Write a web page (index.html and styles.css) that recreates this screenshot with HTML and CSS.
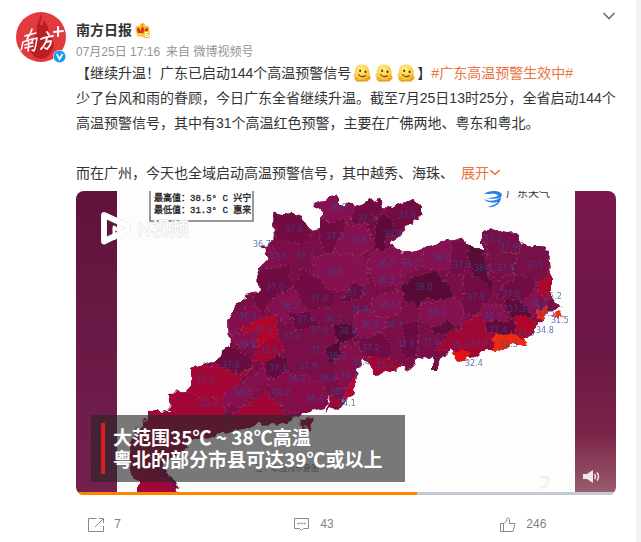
FILE: index.html
```html
<!DOCTYPE html>
<html lang="zh-CN">
<head>
<meta charset="utf-8">
<meta name="viewport" content="width=device-width, initial-scale=1">
<title>南方日报</title>
<link rel="stylesheet" href="styles.css">
</head>
<body>
<svg class="defs" aria-hidden="true">
  <defs>
    <radialGradient id="face" cx=".4" cy=".3" r=".75"><stop offset="0" stop-color="#fff09a"/><stop offset=".6" stop-color="#fdcf3c"/><stop offset="1" stop-color="#efa11f"/></radialGradient>
    <symbol id="melt" viewBox="0 0 18 18">
      <path d="M2 10C1 4 4 .5 9 .5s8 4 7.500 9c-.2 2 .8 3 1 4 .3 2-1.500 2-2 3-1 1.500-4 1-6.500 1s-5 .6-6-.8c-1.500-.4-2-1.700-1.200-2.700C2.500 13 2.200 12 2 10z" fill="url(#face)"/>
      <path d="M1.500 9.500c-1.300 2 .5 5.500 3.500 5M13 14.500c1.500.3 3-.3 3.500-1M4 16.500c3 .7 7 .4 9.500-.3" fill="none" stroke="#df9520" stroke-width=".8"/>
      <ellipse cx="7.200" cy="6.800" rx="1" ry="1.400" fill="#5b3215"/><ellipse cx="12.500" cy="7.800" rx="1" ry="1.400" fill="#5b3215"/>
      <path d="M5.500 10.500c1.500 2 4.500 2.500 7 1.200" fill="none" stroke="#70400f" stroke-width="1.100" stroke-linecap="round"/>
    </symbol>
  </defs>
</svg>
<article class="card">
  <header class="head">
    <a class="avatar" href="#" aria-label="南方日报">
      <svg viewBox="0 0 50 50">
        <circle cx="25" cy="25" r="25" fill="#e13a3f"/>
        <path d="M25 1c3 6-3 9 0 13 2-2 3-4 2-6 8 7 4 12 7 15 5 7 5 14-1 20-4 5-12 5-16 0-5-6-4-12 1-18 4-5 2-9 4-14 1-4 3-6 3-10z" fill="#b91e25"/>
        <g fill="none" stroke="#fff" stroke-linecap="round" stroke-linejoin="round">
          <path d="M9 24c4-1 7-2 11-3M16 17c-1 4-3 7-5 10M7 30c-1 4-1 6-2 8M7 30c5-2 9-3 14-4-1 5-1 9-3 13l-2-1M12 29l1 2M17 28l-2 3M9 33c3-1 6-2 8-2M9 36c3-1 5-1 8-2M13 31c0 3-1 5-1 8" stroke-width="1.500"/>
          <path d="M31 20l2 3M25 27c4-2 7-2 12-3M31 26c-1 5-3 8-6 11M30 30l5-1c0 4-2 6-4 8l-2-1" stroke-width="1.800"/>
          <path d="M42 15v9M38 20l9-1" stroke-width="2"/>
        </g>
      </svg>
      <svg class="verified" viewBox="0 0 13 13"><circle cx="6.500" cy="6.500" r="6.500" fill="#fff"/><circle cx="6.500" cy="6.500" r="6" fill="#129cf3"/><path d="M3.700 4l2.800 5.200L9.500 4" fill="none" stroke="#fff" stroke-width="1.700"/></svg>
    </a>
    <div class="who">
      <div class="name-row">
        <a class="name" href="#">南方日报</a>
        <svg class="crown" viewBox="0 0 15 15"><path d="M2.500 13.500L.5 6c0-2.500 2-4 4.300-3C5 1 6 0 7.500 0s2.500 1 2.700 3c2.300-1 4.300.5 4.300 3l-2 7.500z" fill="#fbb92b"/><path d="M2 6c.5-2 3.500-1.500 4 4H3.200zM13 6c-.5-2-3.500-1.500-4 4h3z" fill="#cf2a1a"/><path d="M7.500 3.500L9 5.500v5H6v-5z" fill="#d93a1e"/><path d="M3 10.500h9v2H3z" fill="#f9dc4d"/><path d="M6.500 2h2" stroke="#e98a15"/><rect x="8.500" y="8" width="6" height="7" rx="1" fill="#f6b428"/><path d="M13.200 9.500h-3v4h3v-2h-3" fill="none" stroke="#fff"/></svg>
      </div>
      <div class="meta"><a href="#">07月25日 17:16</a><span>来自 <a href="#">微博视频号</a></span></div>
    </div>
    <button class="more" aria-label="更多"><svg viewBox="0 0 14 8"><path d="M1.500 1l5.500 5.500L12.500 1" fill="none" stroke="#69727f" stroke-width="1.600"/></svg></button>
  </header>

  <div class="body">
    <div class="text">
      <p>【继续升温！广东已启动144个高温预警信号<svg class="emoji"><use href="#melt"/></svg><svg class="emoji"><use href="#melt"/></svg><svg class="emoji"><use href="#melt"/></svg>】<a href="#">#广东高温预警生效中#</a><br>少了台风和雨的眷顾，今日广东全省继续升温。截至7月25日13时25分，全省启动144个高温预警信号，其中有31个高温红色预警，主要在广佛两地、粤东和粤北。</p>
      <p class="last">而在广州，今天也全域启动高温预警信号，其中越秀、海珠、<a class="expand" href="#">展开<svg viewBox="0 0 10 6"><path d="M1 1l4 3.500L9 1" fill="none" stroke="#eb7340" stroke-width="1.400"/></svg></a></p>
    </div>

    <section class="video" aria-label="视频">
      <svg class="frame" viewBox="76 191 540 304" preserveAspectRatio="xMidYMid slice">
        <defs>
          <linearGradient id="left" x1="0" y1="0" x2="0" y2="1"><stop offset="0" stop-color="#60133c"/><stop offset="1" stop-color="#74204f"/></linearGradient>
          <linearGradient id="right" x1="0" y1="0" x2="0" y2="1"><stop offset="0" stop-color="#79184c"/><stop offset=".5" stop-color="#6b1644"/><stop offset=".8" stop-color="#7c2349"/><stop offset="1" stop-color="#9a5f70"/></linearGradient>
          <clipPath id="land"><path d="M138 495L138 482 131 470 130 453 135 427 144 425 146 412 171 410 169 393 186 392 191 387 191 370 211 362 229 347 228 323 234 307 244 302 245 295 260 290 257 270 267 260 262 247 275 235 272 225 275 213 300 216 310 230 322 228 322 212 314 205 324 201 337 194 343 204 353 207 380 197 382 207 393 208 407 202 413 199 422 205 422 215 403 228 399 238 390 243 403 253 423 248 443 243 463 237 468 247 482 249 482 230 490 229 506 234 518 233 523 245 542 245 548 255 550 263 552 277 552 297 557 305 563 307 556 311 548 313 542 321 537 323 534 333 527 337 527 345 514 345 500 350 491 350 480 353 470 358 460 354 450 350 442 360 439 369 432 369 432 359 425 356 413 359 416 364 408 372 407 368 392 370 375 375 368 363 362 358 358 375 352 395 345 400 337 410 330 408 325 414 330 395 324 407 316 410 303 413 287 423 257 425 240 431 219 433 204 440 191 440 183 453 163 463 163 470 174 479 179 495Z"/></clipPath>
          <filter id="rough" x="-5%" y="-5%" width="110%" height="110%" color-interpolation-filters="sRGB"><feTurbulence type="fractalNoise" baseFrequency=".11" numOctaves="2" seed="4"/><feDisplacementMap in="SourceGraphic" scale="10" xChannelSelector="R" yChannelSelector="G"/></filter>
        </defs>
        <rect x="76" y="191" width="540" height="304" fill="#fdfdfd"/>
        <g filter="url(#rough)">
          <g clip-path="url(#land)">
            <rect x="117" y="191" width="458" height="304" fill="#7a0f47"/>
            <g stroke="#a8688a" stroke-width=".5" stroke-dasharray="2 3">
              <path d="M270 210H310V240L298 244 280 240Z" fill="#730b43"/>
              <path d="M310 195L352 195 355 216 345 222 322 219Z" fill="#861151"/>
              <path d="M355 205L382 195 382 213 372 232 352 222Z" fill="#730b43"/>
              <path d="M376 217L391 216 395 232 385 240 382 252 374 248Z" fill="#600a38"/>
              <path d="M383 205L424 195 422 218 395 234 390 216Z" fill="#730b43"/>
              <path d="M322 222L345 218 347 231 335 243 332 253 320 247Z" fill="#730b43"/>
              <path d="M347 223L368 225 375 245 360 256 332 253 338 241Z" fill="#861151"/>
              <path d="M312 258L330 252 361 256 370 270 367 285 341 292 319 285Z" fill="#861151"/>
              <path d="M262 245L275 247 280 265 267 273 256 267Z" fill="#82104c"/>
              <path d="M260 270L288 267 293 285 270 300 263 315 254 300Z" fill="#6f0b40"/>
              <path d="M368 254L390 246 406 250 403 285 376 286 369 270Z" fill="#861151"/>
              <path d="M403 250L422 247 422 268 401 277Z" fill="#861151"/>
              <path d="M421 247L450 242 452 265 438 272 423 264Z" fill="#861151"/>
              <path d="M402 285L420 276 436 270 457 298 440 302 427 297 416 309 403 297Z" fill="#570b34"/>
              <path d="M450 241L468 239 471 260 463 276 445 276 452 259Z" fill="#720d46"/>
              <path d="M468 245L482 248 488 270 495 290 491 293 471 273Z" fill="#580c36"/>
              <path d="M483 228L522 234 519 251 489 254Z" fill="#771047"/>
              <path d="M486 254L519 252 513 274 496 281Z" fill="#771047"/>
              <path d="M520 247L546 243 553 275 536 283 514 272Z" fill="#771047"/>
              <path d="M463 278L477 276 496 294 486 302 476 319 462 311Z" fill="#720d43"/>
              <path d="M500 288L521 272 536 284 527 296 508 301 497 298Z" fill="#720d43"/>
              <path d="M540 280L553 269 555 295 546 301 537 290Z" fill="#ab062d"/>
              <path d="M522 303L537 284 540 310 529 321 518 314Z" fill="#861151"/>
              <path d="M420 304L458 298 465 313 459 331 438 329 420 319Z" fill="#861151"/>
              <path d="M482 304L500 304 507 319 492 328 477 319Z" fill="#861151"/>
              <path d="M505 301L521 298 531 315 520 323 509 316Z" fill="#5f0b39"/>
              <path d="M487 322L512 319 515 329 505 335 485 333Z" fill="#650a3b"/>
              <path d="M466 322L481 316 485 332 504 336 497 355 459 358 434 348Z" fill="#a10735"/>
              <path d="M515 316L525 314 539 325 530 342 514 335Z" fill="#b00429"/>
              <path d="M537 308L550 306 547 318 537 319Z" fill="#ee2714"/>
              <path d="M494 336L510 333 528 339 528 350 494 350Z" fill="#ec2c0e"/>
              <path d="M430 328L449 322 459 326 445 336 430 334Z" fill="#610b39"/>
              <path d="M403 323L419 321 418 355 403 358Z" fill="#6c0b42"/>
              <path d="M300 271L310 271 337 300 323 310 300 306 292 295Z" fill="#700b43"/>
              <path d="M344 297L353 282 365 287 358 298 344 304Z" fill="#6a0b40"/>
              <path d="M265 309L292 287 306 307 285 323 275 314Z" fill="#861151"/>
              <path d="M242 324L276 315 278 343 270 351 260 344 242 341Z" fill="#b1052b"/>
              <path d="M230 315L256 304 264 315 243 328 229 330Z" fill="#850d4b"/>
              <path d="M333 326L352 320 356 340 337 347Z" fill="#570a35"/>
              <path d="M354 315L365 309 386 319 383 333 357 335Z" fill="#861151"/>
              <path d="M372 299L401 288 401 313 386 319 371 310Z" fill="#861151"/>
              <path d="M290 313L307 312 320 325 296 332Z" fill="#690b40"/>
              <path d="M229 334L257 331 258 345 239 348Z" fill="#861151"/>
              <path d="M211 360L230 346 255 361 247 371 230 373Z" fill="#6b0c41"/>
              <path d="M258 344L275 337 284 349 270 367 253 361Z" fill="#a20533"/>
              <path d="M265 361L282 355 289 369 276 379 265 373Z" fill="#650a3c"/>
              <path d="M326 347L337 343 343 356 335 362 328 359Z" fill="#570a35"/>
              <path d="M355 342L382 333 392 345 389 361 373 363Z" fill="#700b43"/>
              <path d="M359 355L394 359 408 369 377 378Z" fill="#a10632"/>
              <path d="M339 347L361 344 359 382 342 390 335 369Z" fill="#850e4c"/>
              <path d="M185 390L190 368 217 365 238 374 252 369 235 386 223 408 196 403Z" fill="#a40736"/>
              <path d="M244 382L267 366 267 380 243 407 222 408 227 391Z" fill="#87104f"/>
              <path d="M267 380L294 372 322 382 332 409 302 417 283 410 272 389Z" fill="#850e4a"/>
              <path d="M253 401L264 392 280 406 288 424 230 435 233 413Z" fill="#a00635"/>
              <path d="M168 389L224 401 229 438 182 452 152 463 184 500 132 500 127 425 145 409Z" fill="#a00737"/>
              <path d="M347 383L357 373 356 400 344 405Z" fill="#b40632"/>
            </g>
          </g>
          <path d="M552 316L561 313 564 317 557 319Z" fill="#ee3319"/>
          <path d="M451 353L461 349 470 355 465 361 456 358Z" fill="#e01313"/>
          <path d="M330 396L342 399 339 407 330 407ZM301 420L315 415 310 428 300 429Z" fill="#9a0a34"/>
        </g>
        <g class="temps">
          <text x="329" y="210">36.9</text><text x="358" y="221">37.1</text><text x="398" y="218">37.0</text><text x="285" y="232">37.9</text><text x="326" y="239">37.9</text><text x="349" y="243">36.8</text><text x="384" y="237">38.3</text><text x="253" y="247">36.7</text><text x="269" y="259">37.3</text><text x="296" y="259">37.7</text><text x="325" y="275">36.5</text><text x="377" y="266">36.5</text><text x="402" y="266">36.5</text><text x="433" y="261">36.0</text><text x="453" y="268">37.0</text><text x="474" y="271">38.9</text><text x="484" y="242">37.2</text><text x="500" y="250">37.9</text><text x="497" y="271">37.5</text><text x="526" y="268">37.1</text>
          <text x="266" y="290">37.0</text><text x="377" y="283">36.3</text><text x="415" y="290">38.0</text><text x="310" y="301">37.4</text><text x="347" y="296">37.1</text><text x="467" y="300">37.9</text><text x="502" y="297">37.8</text><text x="544" y="299">35.2</text><text x="281" y="309">36.7</text><text x="351" y="312">36.8</text><text x="378" y="308">36.6</text><text x="428" y="315">36.1</text><text x="239" y="319">36.4</text><text x="297" y="322">37.6</text><text x="325" y="322">36.7</text><text x="484" y="319">36.7</text><text x="508" y="312">37.3</text><text x="529" y="307">36.8</text><text x="537" y="316">31.5</text><text x="551" y="323">31.5</text>
          <text x="255" y="333">35.1</text><text x="283" y="339">37.9</text><text x="310" y="333">37.0</text><text x="339" y="334">38.0</text><text x="361" y="328">36.9</text><text x="385" y="328">36.7</text><text x="489" y="333">37.4</text><text x="536" y="333">34.8</text><text x="517" y="336">33.9</text><text x="422" y="345">37.0</text><text x="397" y="347">37.6</text><text x="451" y="348">35.3</text><text x="470" y="346">33.0</text><text x="500" y="347">32.3</text><text x="465" y="366">32.4</text><text x="238" y="347">36.6</text><text x="260" y="353">35.8</text><text x="310" y="353">37.7</text><text x="328" y="359">38.3</text><text x="362" y="351">37.2</text><text x="222" y="368">37.6</text><text x="269" y="371">37.4</text><text x="299" y="369">37.9</text><text x="352" y="365">36.4</text><text x="376" y="368">35.4</text><text x="196" y="382">35.3</text><text x="288" y="382">36.6</text><text x="319" y="381">36.8</text><text x="340" y="378">36.7</text><text x="200" y="406">35.3</text><text x="234" y="396">36.6</text><text x="273" y="395">36.2</text><text x="306" y="402">36.6</text><text x="330" y="395">36.7</text><text x="338" y="406">34.1</text>
        </g>
        <rect x="76" y="191" width="41" height="304" fill="url(#left)"/>
        <rect x="575" y="191" width="41" height="304" fill="url(#right)"/>
        <path d="M150 189H253V221H150Z" fill="#fff" stroke="#777" stroke-width="1.500"/>
        <g class="legend"><text x="154" y="201">最高值：38.5° C 兴宁</text><text x="154" y="213">最低值：31.3° C 惠来</text></g>
        <g fill="none" stroke-linejoin="round">
          <path d="M104 215V241L128 230V226Z" stroke="#e4e4e4" stroke-width="6"/>
          <path d="M104 215V242L128 230V226Z" stroke="#fff" stroke-width="5"/>
          <path d="M114 240V227L119 231V236" stroke="#fff" stroke-width="3"/>
        </g>
        <text class="mark" x="137" y="236">N视频</text>
        <path d="M484 194c5-4 17-4 18 1 0 3-8 5-16 3 6 0 12-1 12-3-3-2-9-1-14-1zM484 199c5 3 13 2 17-2 0 7-7 11-13 10 5-2 9-3 10-5-5 1-11 1-14-3z" fill="#267ee5"/>
        <text class="brand" x="506" y="197">广东天气</text>
        <text class="note" x="255" y="471">注：本图为示意图</text>
        <path d="M540 477h7q3 5-3 10h-4" fill="none" stroke="#f1f1f1" stroke-width="3"/>
      </svg>
      <div class="caption">大范围35℃ ~ 38℃高温<br>粤北的部分市县可达39℃或以上</div>
      <button class="sound" aria-label="静音"><svg viewBox="0 0 17 13"><path d="M0 4h4l6-4v13L4 9H0z" fill="#f1e5ea"/><path d="M11.500 4q2 2.500 0 5M14 2.500q3 4 0 8" fill="none" stroke="#f1e5ea" stroke-width="1.400"/></svg></button>
      <progress class="progress" value="63.200" max="100" aria-label="播放进度"></progress>
    </section>
  </div>

  <footer class="actions">
    <button><svg viewBox="0 0 16 14"><path d="M8.500.5h-8v13h15V8M11 .5h4.500V5M15 1L7 9" fill="none" stroke="#87898c"/></svg>7</button>
    <button><svg viewBox="0 0 16 14"><path d="M.5.5h14v10h-5l-2 2-2-2h-5z" fill="none" stroke="#87898c"/><path d="M3.500 5.500h2m1 0h2m1 0h2" stroke="#87898c" stroke-width="1.300"/></svg>43</button>
    <button><svg class="thumb" viewBox="0 0 16 16"><path d="M.5 6.500v8h12.500L15 6.500H9.500V2.500C9.500.3 7 .3 6.800 2.500L6.500 4 4 6.500H.5M3.500 6.500v8" fill="none" stroke="#87898c" stroke-linejoin="round"/></svg>246</button>
  </footer>
</article>
</body>
</html>
```
FILE: styles.css
```css
* { box-sizing: border-box; }
body {
  margin: 0;
  min-height: 100vh;
  padding-right: 5px;
  background: #f2f2f2;
  color: #333;
  font: 14px/25px "Liberation Sans", "Noto Sans CJK SC", sans-serif;
}
a { color: inherit; text-decoration: none; }
button { border: 0; padding: 0; background: none; color: inherit; font: inherit; cursor: pointer; }
svg { display: block; }
p { margin: 0; }
.defs { position: absolute; width: 0; height: 0; }
.card { min-height: 100vh; background: #fff; }

.head { display: flex; gap: 10px; padding: 12px 20px 0 16px; height: 61px; }
.avatar { position: relative; flex: none; width: 50px; height: 50px; }
.verified { position: absolute; right: 0; bottom: -1px; width: 13px; height: 13px; }
.who { flex: 1; padding-top: 7px; }
.name-row { display: flex; align-items: center; gap: 3px; line-height: 22px; }
.name { font-weight: 700; }
.crown { width: 15px; height: 15px; }
.meta { display: flex; gap: 6px; color: #939393; font-size: 12px; line-height: 22px; }
.more { align-self: flex-start; width: 14px; }

.body { padding: 0 20px 0 76px; }
.text a { color: #eb7340; }
.emoji { display: inline-block; width: 18px; height: 18px; margin: 0 2px; vertical-align: -4px; }
.last { margin-top: 25px; }
.expand { margin-left: 7px; }
.expand svg { display: inline-block; width: 12px; height: 7px; vertical-align: 2px; }

.video { position: relative; margin-top: 5px; border-radius: 8px; overflow: hidden; }
.frame { width: 100%; height: auto; }
.temps { fill: #334b96; font: 8px "DejaVu Sans", sans-serif; opacity: .75; }
.legend { fill: #222; font: 9px "Liberation Mono", "Noto Sans CJK SC", monospace; stroke: #222; stroke-width: .3px; }
.mark { fill: #fff; stroke: #dcdcdc; stroke-width: 1px; paint-order: stroke; font: 19px "Liberation Sans", "Noto Sans CJK SC", sans-serif; }
.brand { fill: #333; font: 11px "Noto Sans CJK SC", sans-serif; }
.note { fill: #777; font: 8px "Noto Sans CJK SC", sans-serif; }
.caption {
  position: absolute;
  left: 15px;
  bottom: 13px;
  width: 314px;
  padding: 11px 0 12px 22px;
  background: linear-gradient(#d81e20, #d81e20) 10px 8px / 4px 51px no-repeat, rgba(39, 39, 39, .62);
  color: #fff;
  font: 700 19px/22px "Noto Sans CJK SC", sans-serif;
  white-space: nowrap;
}
.sound { position: absolute; right: 16px; bottom: 12px; width: 17px; }
.progress {
  position: absolute;
  left: 0;
  bottom: 0;
  width: 100%;
  height: 3px;
  border: 0;
  background: #c5cad5;
  appearance: none;
}
.progress::-webkit-progress-bar { background: #c5cad5; }
.progress::-webkit-progress-value { background: #ff8200; }

.actions { display: grid; grid-template-columns: repeat(3, 1fr); padding: 17px 8px 6px 0; }
.actions button { display: flex; align-items: center; justify-content: center; gap: 10px; color: #808388; font-size: 12px; line-height: 25px; }
.actions svg { width: 16px; height: 14px; }
.actions .thumb { height: 16px; }
```
